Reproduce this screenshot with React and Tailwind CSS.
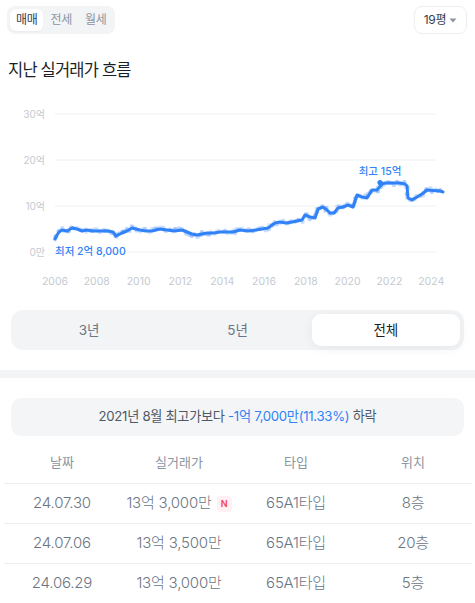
import { useState } from 'react';

const FONT = { fontFamily: 'Inter, "Noto Sans CJK KR", sans-serif' };

// chart line, in page coordinates (svg viewBox matches page)
const LINE = [
  [55, 239], [57, 235], [59, 232], [62, 230], [67, 231], [72, 228], [77, 229], [82, 231], [87, 230],
  [92, 231], [100, 231], [108, 231], [113, 232], [116, 236], [122, 233], [127, 231], [132, 228],
  [140, 230], [146, 231], [152, 231], [160, 229], [167, 230], [175, 231], [182, 230], [187, 232],
  [192, 234], [197, 235], [207, 233], [214, 233], [220, 232], [228, 232], [233, 232], [240, 230],
  [248, 231], [256, 230], [262, 229], [268, 228], [272, 225], [275, 223], [280, 222], [286, 223],
  [292, 222], [297, 221], [302, 220], [305, 215], [310, 217], [315, 218], [318, 209], [323, 207],
  [327, 210], [330, 213], [334, 213], [338, 208], [343, 207], [348, 205], [353, 207], [357, 195],
  [362, 197], [367, 198], [372, 190], [377, 190], [382, 184], [385, 183], [400, 183], [405, 184],
  [407, 186], [408, 198], [412, 200], [417, 197], [422, 194], [427, 190], [440, 191], [443, 192],
];

function scatter() {
  const pts = [];
  let s = 7;
  const rnd = () => {
    s = (s * 9301 + 49297) % 233280;
    return s / 233280;
  };
  for (let i = 0; i < LINE.length - 1; i++) {
    const [x1, y1] = LINE[i];
    const [x2, y2] = LINE[i + 1];
    const n = Math.max(1, Math.round(Math.hypot(x2 - x1, y2 - y1) / 2.5));
    for (let k = 0; k < n; k++) {
      const t = k / n;
      pts.push([x1 + (x2 - x1) * t + (rnd() - 0.5) * 2, y1 + (y2 - y1) * t + (rnd() - 0.5) * 4, rnd()]);
    }
  }
  return pts;
}
const DOTS = scatter();

function Chart() {
  const grid = [
    { y: 114, label: '30억' },
    { y: 160, label: '20억' },
    { y: 206, label: '10억' },
    { y: 252, label: '0만' },
  ];
  const years = [2006, 2008, 2010, 2012, 2014, 2016, 2018, 2020, 2022, 2024];
  return (
    <svg width="475" height="213" viewBox="0 82 475 213" className="block">
      {grid.map((g) => (
        <g key={g.label}>
          <line x1="55" x2="436" y1={g.y} y2={g.y} stroke="#eef0f3" strokeWidth="1" />
          <text x="45" y={g.y + 3.5} textAnchor="end" fontSize="10" fill="#c5cad1" style={FONT}>
            {g.label}
          </text>
        </g>
      ))}
      {years.map((y, i) => (
        <text key={y} x={55 + i * 41.8} y="285" textAnchor="middle" fontSize="10.5" fill="#c5cad1" style={FONT}>
          {y}
        </text>
      ))}
      {DOTS.map(([x, y, o], i) => (
        <circle key={i} cx={x} cy={y} r="2.3" fill="#3182f6" opacity={0.15 + o * 0.25} />
      ))}
      <polyline
        points={LINE.map((p) => p.join(',')).join(' ')}
        fill="none"
        stroke="#3182f6"
        strokeWidth="3"
        strokeLinejoin="round"
        strokeLinecap="round"
      />
      <circle cx="380" cy="182.5" r="2.6" fill="#3182f6" />
      <text x="380" y="175" textAnchor="middle" fontSize="10.5" fontWeight="500" fill="#3182f6" style={FONT}>
        최고 15억
      </text>
      <text x="55" y="255" fontSize="10.5" fontWeight="500" fill="#3182f6" style={FONT}>
        최저 2억 8,000
      </text>
    </svg>
  );
}

const ROWS = [
  { date: '24.07.30', price: '13억 3,000만', isNew: true, type: '65A1타입', floor: '8층' },
  { date: '24.07.06', price: '13억 3,500만', type: '65A1타입', floor: '20층' },
  { date: '24.06.29', price: '13억 3,000만', type: '65A1타입', floor: '5층' },
];

export default function App() {
  const [deal, setDeal] = useState('매매');
  const [range, setRange] = useState('전체');

  return (
    <div className="w-[475px] h-[603px] overflow-hidden bg-white text-[#191f28]" style={FONT}>
      {/* top bar */}
      <div className="flex items-start justify-between px-[7px] pt-[6px]">
        <div className="flex h-[28px] items-center gap-[1px] rounded-[8px] bg-[#f2f4f6] px-[3px]">
          {['매매', '전세', '월세'].map((t) => (
            <button
              key={t}
              onClick={() => setDeal(t)}
              className={`h-[22px] rounded-[6px] px-[6px] text-[12px] tracking-[-0.3px] ${
                deal === t ? 'bg-white text-[#333d4b] shadow-[0_1px_2px_rgba(0,0,0,0.04)]' : 'text-[#8b95a1]'
              }`}
            >
              {t}
            </button>
          ))}
        </div>
        <button className="mr-[1px] flex h-[28px] w-[53px] items-center justify-center gap-[3px] rounded-[8px] border border-[#eceef1] bg-white text-[12px] text-[#333d4b] tracking-[-0.3px]">
          19평
          <svg width="8" height="5" viewBox="0 0 8 5">
            <path d="M0.5 0.5h7L4 4.5z" fill="#8b95a1" />
          </svg>
        </button>
      </div>

      {/* title */}
      <h2 className="mt-[24px] px-[8px] text-[16.5px] leading-[24px] font-normal tracking-[-0.8px] text-[#191f28]">
        지난 실거래가 흐름
      </h2>

      <Chart />

      {/* range selector */}
      <div className="mx-[11px] mt-[15px] grid h-[40px] grid-cols-3 rounded-[12px] bg-[#f2f4f6] p-[4px]">
        {['3년', '5년', '전체'].map((r) => (
          <button
            key={r}
            onClick={() => setRange(r)}
            className={`rounded-[9px] text-[13.5px] ${
              range === r
                ? 'bg-white font-normal text-[#191f28] shadow-[0_2px_12px_rgba(0,0,0,0.06)]'
                : 'text-[#6b7684]'
            }`}
          >
            {r}
          </button>
        ))}
      </div>

      <div className="mt-[20px] h-[8px] bg-[#f2f4f6]" />

      {/* summary */}
      <div className="mx-[11px] mt-[20px] flex h-[38px] items-center justify-center rounded-[10px] bg-[#f4f5f7] text-[13.2px] tracking-[-0.3px] text-[#4e5968]">
        2021년 8월 최고가보다&nbsp;<span className="text-[#3182f6]">-1억 7,000만(11.33%)</span>&nbsp;하락
      </div>

      {/* table */}
      <div className="mt-[17px] px-[3.5px]">
        <div className="grid h-[30px] grid-cols-4 items-start text-center text-[13px] text-[#8b95a1]">
          <div>날짜</div>
          <div>실거래가</div>
          <div>타입</div>
          <div>위치</div>
        </div>
        {ROWS.map((r) => (
          <div
            key={r.date}
            className="grid h-[40px] grid-cols-4 items-center border-t border-[#eceef1] text-center text-[15px] font-light text-[#6b7684] tracking-[-0.2px]"
          >
            <div>{r.date}</div>
            <div className="flex items-center justify-center gap-[5px] whitespace-nowrap">
              {r.price}
              {r.isNew && (
                <span className="flex h-[16px] w-[15px] items-center justify-center rounded-[4px] bg-[#fff0f3] text-[9px] font-semibold text-[#f04452]">
                  N
                </span>
              )}
            </div>
            <div>{r.type}</div>
            <div>{r.floor}</div>
          </div>
        ))}
      </div>
    </div>
  );
}
